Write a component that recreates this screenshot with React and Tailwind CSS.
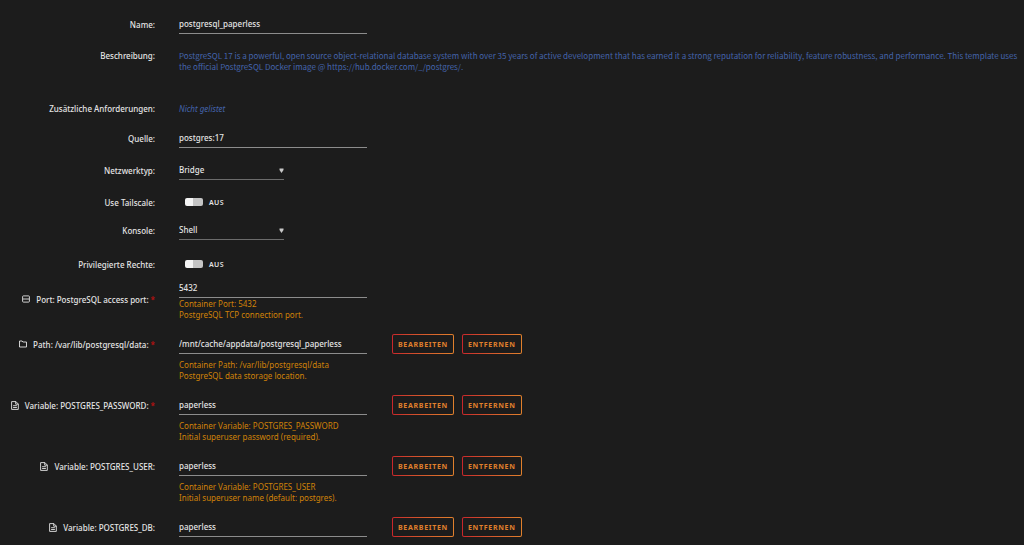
import React, { useState } from 'react';

const Row = ({ label, htmlFor, icon, required, className = '', children }) => (
    <div className={`grid grid-cols-[155px_1fr] gap-x-6 ${className}`}>
        <label htmlFor={htmlFor} className="flex items-center justify-end font-medium whitespace-nowrap">
            {icon}
            <span>{label}</span>
            {required && <span className="ml-0.5 text-[#c01010]">*</span>}
        </label>
        <div>{children}</div>
    </div>
);

const TextField = ({ id, value, onChange }) => (
    <input
        id={id}
        type="text"
        value={value}
        onChange={onChange}
        className="block h-5 w-[188px] border-b border-[#8c8c8c] bg-transparent font-medium outline-none focus:border-[#ff8c2f]"
    />
);

const Dropdown = ({ id, options }) => (
    <div className="relative w-[105px]">
        <select
            id={id}
            className="block h-5 w-full appearance-none border-b border-[#6c6c6c] bg-transparent font-medium outline-none"
        >
            {options.map((option) => (
                <option key={option} className="bg-[#1c1c1c]">{option}</option>
            ))}
        </select>
        <svg viewBox="0 0 5 5" className="pointer-events-none absolute right-0 top-2 h-[5px] w-[5px]" fill="#c8c8c8">
            <path d="M0.5 0.5h4v1.5L2.5 5 0.5 2z" />
        </svg>
    </div>
);

const Toggle = ({ id }) => {
    const [on, setOn] = useState(false);

    return (
        <div className="ml-1.5 flex h-5 items-center gap-1.5">
            <input
                id={id}
                type="checkbox"
                checked={on}
                onChange={() => setOn(!on)}
                className="h-2 w-[18px] appearance-none rounded-xs bg-linear-to-r from-[#f4f4f4] from-45% to-[#c4c4c4] to-45% checked:from-[#e68a00] checked:to-[#f4f4f4]"
            />
            <span className="text-[7px] font-semibold tracking-wider">{on ? 'AN' : 'AUS'}</span>
        </div>
    );
};

const ActionButton = ({ children }) => (
    <button
        type="button"
        className="h-5 rounded-xs bg-linear-to-r from-[#c8262b] to-[#e0802c] p-px"
    >
        <span className="flex h-full items-center rounded-[1px] bg-[#1c1c1c] px-[5px] text-[7px] font-bold uppercase tracking-widest text-[#e0802c]">
            {children}
        </span>
    </button>
);

const PortIcon = () => (
    <svg viewBox="0 0 8 8" className="mr-1.5 h-2 w-2" fill="none" stroke="currentColor">
        <rect x="0.6" y="0.9" width="6.8" height="6.2" rx="0.8" strokeWidth="0.9" />
        <path d="M1 4h6" strokeWidth="0.9" />
    </svg>
);

const FolderIcon = () => (
    <svg viewBox="0 0 8 8" className="mr-1.5 h-2 w-2" fill="none" stroke="currentColor" strokeWidth="0.9">
        <path d="M0.5 1h2.6l0.8 1h3.6v5h-7z" strokeLinejoin="round" />
    </svg>
);

const FileIcon = () => (
    <svg viewBox="0 0 8 9" className="mr-1.5 h-[9px] w-2" fill="none" stroke="currentColor" strokeWidth="0.9">
        <path d="M0.6 0.6h4.3l2.4 2.4v5.4H0.6z" strokeLinejoin="round" />
        <path d="M4.7 0.6v2.6h2.6M2.1 4.7h3.8M2.1 6.5h3.8" />
    </svg>
);

const configEntries = [
    {
        id: 'dataPath',
        label: 'Path: /var/lib/postgresql/data:',
        icon: <FolderIcon />,
        required: true,
        value: '/mnt/cache/appdata/postgresql_paperless',
        target: 'Container Path: /var/lib/postgresql/data',
        help: 'PostgreSQL data storage location.',
    },
    {
        id: 'password',
        label: 'Variable: POSTGRES_PASSWORD:',
        icon: <FileIcon />,
        required: true,
        value: 'paperless',
        target: 'Container Variable: POSTGRES_PASSWORD',
        help: 'Initial superuser password (required).',
    },
    {
        id: 'user',
        label: 'Variable: POSTGRES_USER:',
        icon: <FileIcon />,
        value: 'paperless',
        target: 'Container Variable: POSTGRES_USER',
        help: 'Initial superuser name (default: postgres).',
    },
    {
        id: 'database',
        label: 'Variable: POSTGRES_DB:',
        icon: <FileIcon />,
        value: 'paperless',
    },
];

const App = () => {
    const [values, setValues] = useState({
        name: 'postgresql_paperless',
        repository: 'postgres:17',
        port: '5432',
        ...Object.fromEntries(configEntries.map((entry) => [entry.id, entry.value])),
    });

    const field = (id) => (
        <TextField id={id} value={values[id]} onChange={(e) => setValues({ ...values, [id]: e.target.value })} />
    );

    return (
        <div className="min-h-screen bg-[#1c1c1c] font-['Noto_Sans',sans-serif] text-[8px] leading-[11px] text-[#e4e4e4]">
            <form className="pt-3.5 pb-2">
                <Row label="Name:" htmlFor="name">{field('name')}</Row>

                <div className="mt-4 grid grid-cols-[155px_1fr] gap-x-6">
                    <span className="text-right font-medium">Beschreibung:</span>
                    <p className="font-['Noto_Sans_CJK_JP','Noto_Sans',sans-serif] text-[#4464ac]">
                        PostgreSQL 17 is a powerful, open source object-relational database system with over 35 years of active development that has earned it a strong reputation for reliability, feature robustness, and performance. This template uses the official PostgreSQL Docker image @ https://hub.docker.com/_/postgres/.
                    </p>
                </div>

                <div className="mt-[31px] grid grid-cols-[155px_1fr] gap-x-6">
                    <span className="text-right font-medium">Zusätzliche Anforderungen:</span>
                    <em className="text-[#4464ac]">Nicht gelistet</em>
                </div>

                <Row label="Quelle:" htmlFor="repository" className="mt-3.5">{field('repository')}</Row>

                <Row label="Netzwerktyp:" htmlFor="network" className="mt-3">
                    <Dropdown id="network" options={['Bridge', 'Host', 'None']} />
                </Row>
                <Row label="Use Tailscale:" htmlFor="tailscale" className="mt-3">
                    <Toggle id="tailscale" />
                </Row>
                <Row label="Konsole:" htmlFor="shell" className="mt-2">
                    <Dropdown id="shell" options={['Shell', 'Bash']} />
                </Row>
                <Row label="Privilegierte Rechte:" htmlFor="privileged" className="mt-3.5">
                    <Toggle id="privileged" />
                </Row>

                {/* Port */}
                <Row label="Port: PostgreSQL access port:" htmlFor="port" icon={<PortIcon />} required className="mt-1">
                    {field('port')}
                    <p className="text-[#d08208]">Container Port: 5432<br />PostgreSQL TCP connection port.</p>
                </Row>

                {/* Paths and variables */}
                <div className="mt-3.5 space-y-3.5">
                    {configEntries.map((entry) => (
                        <div key={entry.id}>
                            <Row label={entry.label} htmlFor={entry.id} icon={entry.icon} required={entry.required}>
                                <div className="flex">
                                    {field(entry.id)}
                                    <div className="ml-[25px] flex gap-2">
                                        <ActionButton>Bearbeiten</ActionButton>
                                        <ActionButton>Entfernen</ActionButton>
                                    </div>
                                </div>
                            </Row>
                            {entry.help && (
                                <p className="mt-[5px] ml-[179px] text-[#d08208]">{entry.target}<br />{entry.help}</p>
                            )}
                        </div>
                    ))}
                </div>
            </form>
        </div>
    );
};

export default App;
